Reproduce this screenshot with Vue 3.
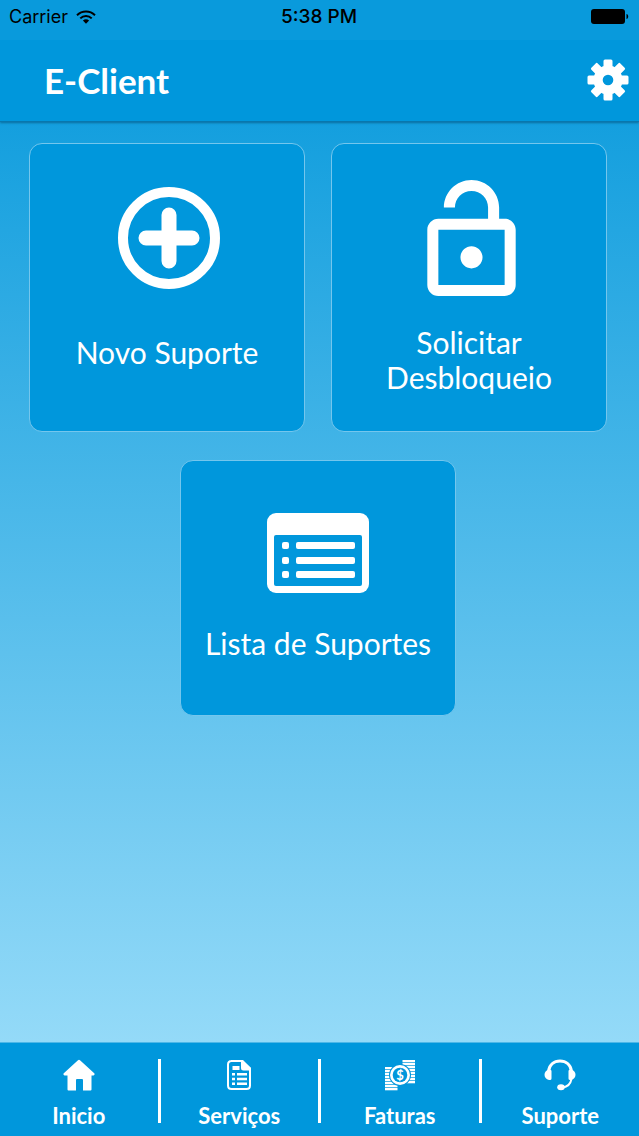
<script setup>
const stripesLeft = [8, 11, 14, 17, 20, 23, 26, 29]
const stripesRight = [1, 4, 7, 10, 13, 16, 19, 22]
const teeth = [0, 45, 90, 135]
const rows = [29, 44, 58]
</script>

<template>
  <div class="screen">
    <header class="top">
      <div class="status">
        <div class="carrier">
          <span>Carrier</span>
          <svg class="wifi" viewBox="0 0 20 14" aria-hidden="true">
            <path d="M1 5.2a13 13 0 0 1 18 0" />
            <path d="M4.3 8.4a8.2 8.2 0 0 1 11.4 0" />
            <path class="solid" d="M6.9 10.6a4.7 4.7 0 0 1 6.2 0L10 13.8z" />
          </svg>
        </div>
        <time class="clock">5:38 PM</time>
        <svg class="battery" viewBox="0 0 38 15" aria-hidden="true">
          <rect width="34" height="15" rx="3" />
          <path d="M35.5 5c2.300 .6 2.300 4.400 0 5z" />
        </svg>
      </div>
      <div class="bar">
        <h1>E-Client</h1>
        <button class="settings" type="button" aria-label="Configurações">
          <svg viewBox="0 0 42 42" aria-hidden="true">
            <rect v-for="a in teeth" :key="a" x="16.500" y="0.500" width="9" height="41" rx="1.500" :transform="`rotate(${a} 21 21)`" />
            <circle cx="21" cy="21" r="14.500" />
            <circle class="hole" cx="21" cy="21" r="5.300" />
          </svg>
        </button>
      </div>
    </header>

    <main class="cards">
      <button class="card" type="button">
        <span class="figure">
          <svg width="102" height="102" viewBox="0 0 102 102" aria-hidden="true">
            <circle class="ring" cx="51" cy="51" r="46" />
            <path class="plus" d="M51 28v46M28 51h46" />
          </svg>
        </span>
        <span class="label">Novo Suporte</span>
      </button>
      <button class="card" type="button">
        <span class="figure">
          <svg width="89" height="116" viewBox="4 1 16 21" aria-hidden="true">
            <path d="M12 17c1.100 0 2-.9 2-2s-.9-2-2-2-2 .9-2 2 .9 2 2 2zm6-9h-1V6c0-2.760-2.240-5-5-5S7 3.240 7 6h2c0-1.660 1.340-3 3-3s3 1.340 3 3v2H6c-1.100 0-2 .9-2 2v10c0 1.100.9 2 2 2h12c1.100 0 2-.9 2-2V10c0-1.100-.9-2-2-2zm0 12H6V10h12v10z" />
          </svg>
        </span>
        <span class="label">Solicitar Desbloqueio</span>
      </button>
      <button class="card list" type="button">
        <span class="figure">
          <svg width="102" height="80" viewBox="0 0 102 80" aria-hidden="true">
            <rect width="102" height="80" rx="9" />
            <rect class="hole" x="7" y="22" width="88" height="51" rx="2" />
            <g v-for="y in rows" :key="y">
              <rect x="15" :y="y" width="7" height="7" rx="2" />
              <rect x="29" :y="y" width="59" height="7" rx="2" />
            </g>
          </svg>
        </span>
        <span class="label">Lista de Suportes</span>
      </button>
    </main>

    <nav class="tabs">
      <a class="tab" href="#inicio">
        <svg viewBox="0 0 32 32" aria-hidden="true">
          <path d="M15 1.300Q16 .2 17 1.300L31.500 14.600Q32 16 30.500 16.500H28.500V30.500Q28.500 31.500 27.500 31.500H20V21Q20 20 19 20H14Q13 20 13 21V31.500H5.500Q4.500 31.500 4.500 30.500V16.500H1.500Q0 16 .5 14.600z" />
        </svg>
        <span>Inicio</span>
      </a>
      <span class="rule"></span>
      <a class="tab" href="#servicos">
        <svg viewBox="0 0 32 32" aria-hidden="true">
          <path class="sheet" d="M8 2h10.500L27 9.500V26.500Q27 30 23.500 30H8.500Q5 30 5 26.500V5.500Q5 2 8.500 2z" />
          <path d="M18 1h2l8 8v2.500h-7.500Q18 11.500 18 9zM9.500 7h7v4h-7zM9 14h3v2.500H9zM14 14h10v2.500H14zM9 18.700h3v2.500H9zM14 18.700h10v2.500H14zM9 23.400h3v2.500H9zM14 23.400h10v2.500H14z" />
        </svg>
        <span>Serviços</span>
      </a>
      <span class="rule"></span>
      <a class="tab" href="#faturas">
        <svg viewBox="0 0 32 32" aria-hidden="true">
          <rect v-for="y in stripesLeft" :key="'l' + y" x="1" :y="y" width="12.500" height="2.300" />
          <rect v-for="y in stripesRight" :key="'r' + y" x="18.500" :y="y" width="12.500" height="2.300" />
          <circle class="hole" cx="16" cy="16" r="11" />
          <circle cx="16" cy="16" r="10" />
          <circle class="hole" cx="16" cy="16" r="7.300" />
          <text x="16" y="20.500" text-anchor="middle">$</text>
        </svg>
        <span>Faturas</span>
      </a>
      <span class="rule"></span>
      <a class="tab" href="#suporte">
        <svg viewBox="0 0 32 32" aria-hidden="true">
          <path class="band" d="M4.500 12C5.500 5.500 10 2 16 2s10.500 3.500 11.500 10" />
          <path class="mic" d="M27.500 20C26.500 25 23 28.300 18 28.500" />
          <path d="M5 10.500Q7.500 10 7.500 12V19.500Q7.500 21.500 5 21Q.5 19.500 .5 15.700T5 10.500zM27 10.500Q24.500 10 24.500 12V19.500Q24.500 21.500 27 21Q31.500 19.500 31.500 15.700T27 10.500z" />
          <ellipse cx="17" cy="28.300" rx="3.800" ry="3" />
        </svg>
        <span>Suporte</span>
      </a>
    </nav>
  </div>
</template>

<style>
body {
  margin: 0;
}
</style>

<style scoped>
.screen {
  --blue: #0097dc;
  display: flex;
  flex-direction: column;
  min-height: 100vh;
  color: #fff;
  font-family: Lato, "Open Sans", sans-serif;
  background: linear-gradient(#0c99dc 0, #149fde 122px, #94daf8 calc(100% - 94px));
}

svg {
  display: block;
  fill: #fff;
}

.hole {
  fill: var(--blue);
}

.top {
  background: var(--blue);
  border-bottom: 1px solid #0877ad;
  box-shadow: 0 1px 2px #0b6d9d;
}

.status {
  display: grid;
  grid-template-columns: 1fr auto 1fr;
  align-items: center;
  box-sizing: border-box;
  height: 40px;
  padding: 0 10px 7px 9px;
  color: #000;
  background: #099adc;
  font-family: Inter, sans-serif;
  font-size: 18px;
}

.carrier {
  display: flex;
  align-items: center;
  gap: 8px;
}

.wifi {
  width: 20px;
  height: 14px;
  fill: none;
  stroke: #000;
  stroke-width: 2;
}

.wifi .solid {
  fill: #000;
  stroke: none;
}

.clock {
  font-size: 19px;
  font-weight: 500;
}

.battery {
  justify-self: end;
  width: 38px;
  height: 15px;
  fill: #000;
}

.bar {
  display: flex;
  align-items: center;
  justify-content: space-between;
  box-sizing: border-box;
  height: 81px;
  padding: 0 10px 2px 44px;
}

h1 {
  margin: 0;
  font-size: 35px;
  font-weight: 700;
  line-height: 40px;
}

button {
  padding: 0;
  border: 0;
  color: inherit;
  background: none;
  font: inherit;
  cursor: pointer;
}

.settings svg {
  width: 42px;
  height: 42px;
}

.cards {
  display: grid;
  flex: 1;
  grid-template-columns: 1fr 1fr;
  align-content: start;
  gap: 28px 26px;
  padding: 21px 32px 28px 29px;
}

.card {
  display: flex;
  flex-direction: column;
  align-items: center;
  box-sizing: border-box;
  min-height: 289px;
  padding: 35px 20px 20px;
  border: 1px solid #74c6ed;
  border-radius: 13px;
  background: var(--blue);
}

.figure {
  display: flex;
  align-items: center;
  height: 118px;
  padding-left: 4px;
}

.label {
  display: flex;
  align-items: center;
  min-height: 55px;
  margin-top: 28px;
  font-size: 30px;
  line-height: 35px;
  text-align: center;
}

.list {
  grid-column: 1 / -1;
  justify-self: center;
  width: calc(50% - 13px);
  min-height: 256px;
}

.list .figure {
  height: 114px;
  padding-left: 0;
}

.list .label {
  margin-top: 6px;
}

.ring {
  fill: none;
  stroke: #fff;
  stroke-width: 10;
}

.plus {
  fill: none;
  stroke: #fff;
  stroke-width: 15;
  stroke-linecap: round;
}

.tabs {
  display: flex;
  align-items: flex-start;
  padding: 16px 0 7px;
  border-top: 1px solid #4db7e8;
  background: var(--blue);
}

.tab {
  display: flex;
  flex: 1;
  flex-direction: column;
  align-items: center;
  gap: 12px;
  color: inherit;
  font-size: 22px;
  font-weight: 700;
  line-height: 26px;
  text-decoration: none;
}

.tab svg {
  width: 32px;
  height: 32px;
}

.tab text {
  font-size: 13px;
}

.rule {
  width: 3px;
  height: 64px;
  background: #fff;
}

.sheet,
.band,
.mic {
  fill: none;
  stroke: #fff;
  stroke-width: 2;
}

.band {
  stroke-width: 3;
}
</style>
